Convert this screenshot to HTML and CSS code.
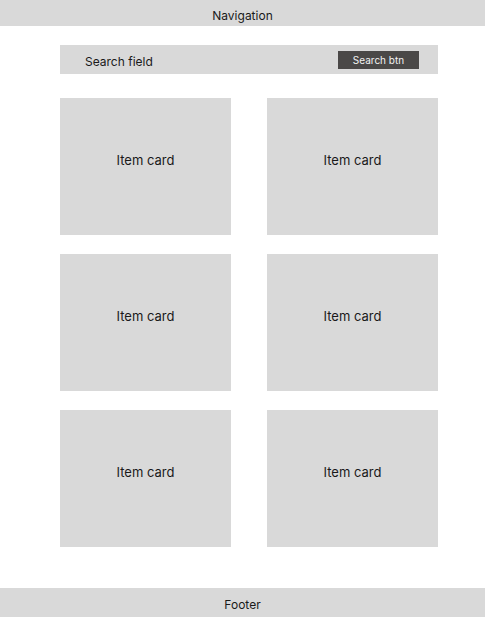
FILE: index.html
```html
<!DOCTYPE html>
<html>
<head>
<meta charset="utf-8">
<link rel="stylesheet" href="styles.css">
</head>
<body>
<div class="page">
  <header class="nav">Navigation</header>
  <main class="main">
    <div class="search">
      <span class="search-label">Search field</span>
      <span class="search-btn">Search btn</span>
    </div>
    <div class="grid">
      <div class="card">Item card</div>
      <div class="card">Item card</div>
      <div class="card">Item card</div>
      <div class="card">Item card</div>
      <div class="card">Item card</div>
      <div class="card">Item card</div>
    </div>
  </main>
  <footer class="footer">Footer</footer>
</div>
</body>
</html>
```
FILE: styles.css
```css
html, body {
  margin: 0;
  padding: 0;
  background: #ffffff;
}
body {
  font-family: Inter, "Liberation Sans", sans-serif;
  color: #1a1a1a;
}
.page {
  height: 617px;
  display: flex;
  flex-direction: column;
}
.nav {
  height: 26px;
  background: #d9d9d9;
  display: flex;
  align-items: center;
  justify-content: center;
  font-size: 12px;
  padding-top: 5px;
  box-sizing: border-box;
}
.main {
  flex: 1;
  padding: 19px 47px 0 60px;
}
.search {
  width: 378px;
  height: 29px;
  background: #d9d9d9;
  display: flex;
  align-items: center;
  justify-content: space-between;
  padding: 0 19px 0 25px;
  box-sizing: border-box;
}
.search-label {
  font-size: 12px;
  padding-top: 3px;
}
.search-btn {
  width: 81px;
  height: 18px;
  background: #4a4847;
  color: #f2f2f2;
  font-size: 10px;
  display: flex;
  align-items: center;
  justify-content: center;
  padding-top: 1px;
  box-sizing: border-box;
}
.grid {
  margin-top: 24px;
  width: 378px;
  display: grid;
  grid-template-columns: 171px 171px;
  grid-auto-rows: 137px;
  column-gap: 36px;
  row-gap: 19px;
}
.card {
  background: #d9d9d9;
  display: flex;
  align-items: center;
  justify-content: center;
  font-size: 13px;
  padding-bottom: 13px;
  box-sizing: border-box;
}
.footer {
  height: 29px;
  background: #d9d9d9;
  display: flex;
  align-items: center;
  justify-content: center;
  font-size: 12px;
  padding-top: 4px;
  box-sizing: border-box;
}
```
